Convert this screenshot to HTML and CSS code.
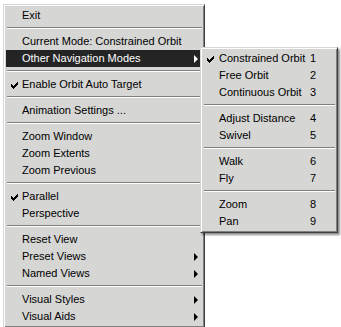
FILE: index.html
```html
<!DOCTYPE html>
<html>
<head>
<meta charset="utf-8">
<link rel="stylesheet" href="styles.css">
</head>
<body>
<div class="menu main">
  <div class="item"><span class="label">Exit</span></div>
  <div class="sep"></div>
  <div class="item"><span class="label">Current Mode: Constrained Orbit</span></div>
  <div class="item active"><span class="label">Other Navigation Modes</span><span class="arrow"></span></div>
  <div class="sep"></div>
  <div class="item"><svg class="check" width="7" height="7" viewBox="0 0 7 7"><path d="M0 2h1v1h1v1h1V3h1V2h1V1h1V0h1v3H6v1H5v1H4v1H3v1H2V6H1V5H0z"/></svg><span class="label">Enable Orbit Auto Target</span></div>
  <div class="sep"></div>
  <div class="item"><span class="label">Animation Settings ...</span></div>
  <div class="sep"></div>
  <div class="item"><span class="label">Zoom Window</span></div>
  <div class="item"><span class="label">Zoom Extents</span></div>
  <div class="item"><span class="label">Zoom Previous</span></div>
  <div class="sep"></div>
  <div class="item"><svg class="check" width="7" height="7" viewBox="0 0 7 7"><path d="M0 2h1v1h1v1h1V3h1V2h1V1h1V0h1v3H6v1H5v1H4v1H3v1H2V6H1V5H0z"/></svg><span class="label">Parallel</span></div>
  <div class="item"><span class="label">Perspective</span></div>
  <div class="sep"></div>
  <div class="item"><span class="label">Reset View</span></div>
  <div class="item"><span class="label">Preset Views</span><span class="arrow"></span></div>
  <div class="item"><span class="label">Named Views</span><span class="arrow"></span></div>
  <div class="sep"></div>
  <div class="item"><span class="label">Visual Styles</span><span class="arrow"></span></div>
  <div class="item"><span class="label">Visual Aids</span><span class="arrow"></span></div>
</div>

<div class="menu sub">
  <div class="item"><svg class="check" width="7" height="7" viewBox="0 0 7 7"><path d="M0 2h1v1h1v1h1V3h1V2h1V1h1V0h1v3H6v1H5v1H4v1H3v1H2V6H1V5H0z"/></svg><span class="label">Constrained Orbit</span><span class="key">1</span></div>
  <div class="item"><span class="label">Free Orbit</span><span class="key">2</span></div>
  <div class="item"><span class="label">Continuous Orbit</span><span class="key">3</span></div>
  <div class="sep"></div>
  <div class="item"><span class="label">Adjust Distance</span><span class="key">4</span></div>
  <div class="item"><span class="label">Swivel</span><span class="key">5</span></div>
  <div class="sep"></div>
  <div class="item"><span class="label">Walk</span><span class="key">6</span></div>
  <div class="item"><span class="label">Fly</span><span class="key">7</span></div>
  <div class="sep"></div>
  <div class="item"><span class="label">Zoom</span><span class="key">8</span></div>
  <div class="item"><span class="label">Pan</span><span class="key">9</span></div>
</div>
</body>
</html>
```

FILE: styles.css
```css
html, body {
  margin: 0;
  padding: 0;
  background: #ffffff;
  width: 341px;
  height: 327px;
  overflow: hidden;
}

body {
  position: relative;
  font-family: "Liberation Sans", Arial, sans-serif;
  font-size: 11px;
  color: #000;
}

.menu {
  background: #d6d6d4;
  border: 1px solid;
  border-color: #d6d6d4 #404040 #404040 #d6d6d4;
  box-shadow: inset 1px 1px 0 #ffffff, inset -1px -1px 0 #808080;
  box-sizing: border-box;
  display: flex;
  flex-direction: column;
}

.main {
  margin: 4px 0 0 3px;
  width: 202px;
  padding: 2px 2px 2px 2px;
}

.sub {
  position: absolute;
  left: 200px;
  top: 47px;
  width: 138px;
  padding: 2px;
  box-shadow: inset 1px 1px 0 #ffffff, inset -1px -1px 0 #808080, 2px 2px 2px rgba(0,0,0,0.45);
}

.item {
  position: relative;
  height: 17px;
  line-height: 17px;
  display: flex;
  align-items: center;
  white-space: nowrap;
}

.main .item {
  padding-left: 16px;
}

.sub .item {
  padding-left: 16px;
  padding-right: 19px;
}

.label {
  flex: 1;
}

.key {
  text-align: right;
}

.active {
  background: #242424;
  color: #ffffff;
}

.check {
  position: absolute;
  left: 5px;
  top: 6px;
  fill: #000;
}

.sub .check {
  left: 4px;
}

.arrow {
  width: 0;
  height: 0;
  border-top: 4px solid transparent;
  border-bottom: 4px solid transparent;
  border-left: 4px solid #000;
  margin-right: 4px;
}

.active .arrow {
  border-left-color: #ffffff;
}

.sep {
  height: 9px;
  box-sizing: border-box;
  padding-top: 3px;
  margin: 0 0 0 1px;
}

.sep::before {
  content: "";
  display: block;
  height: 1px;
  background: #808080;
  border-bottom: 1px solid #ffffff;
}
```
